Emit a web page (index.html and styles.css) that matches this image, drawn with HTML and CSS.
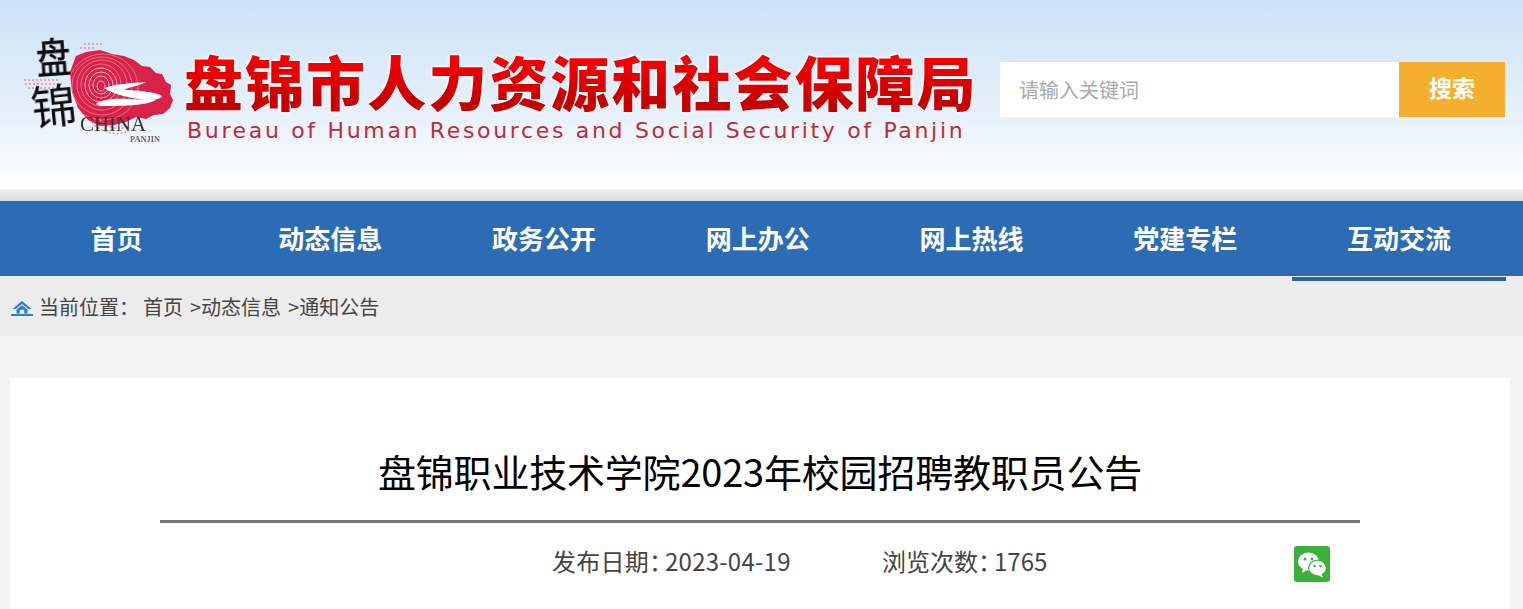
FILE: index.html
```html
<!DOCTYPE html>
<html lang="zh-CN">
<head>
<meta charset="utf-8">
<title>盘锦职业技术学院2023年校园招聘教职员公告</title>
<link rel="stylesheet" href="styles.css">
</head>
<body>
<header class="banner">
  <div class="banner-inner">
    <svg class="logo" viewBox="20 32 156 116" width="156" height="116" aria-label="盘锦 CHINA PANJIN">
      <defs>
        <filter id="soft" x="-5%" y="-5%" width="110%" height="110%"><feGaussianBlur stdDeviation="0.45"/></filter>
        <filter id="rough" x="-5%" y="-5%" width="110%" height="110%"><feGaussianBlur stdDeviation="0.7"/></filter>
        <filter id="ink" x="-10%" y="-10%" width="120%" height="120%"><feGaussianBlur stdDeviation="0.3"/></filter>
        <clipPath id="blobclip"><path d="M76 56 L86 52 L100 50 L112 54 L124 56 L134 60 L142 66 L150 67 L156 73 L162 74 L166 82 L171 85 L170 94 L173 100 L170 108 L163 114 L154 115 L146 119 L136 117 L126 122 L114 125 L100 126 L88 120 L78 108 L72 92 L70 72 Z"/></clipPath>
      </defs>
      <g filter="url(#rough)">
        <path class="blob" d="M76 56 L86 52 L100 50 L112 54 L124 56 L134 60 L142 66 L150 67 L156 73 L162 74 L166 82 L171 85 L170 94 L173 100 L170 108 L163 114 L154 115 L146 119 L136 117 L126 122 L114 125 L100 126 L88 120 L78 108 L72 92 L70 72 Z"/>
      </g>
      <g class="ridges-faint" filter="url(#soft)">
        <path d="M24 80 H60 M25 84 H62 M28 88 H64"/>
        <path d="M84 44 H104 M80 48 H96"/>
        <path d="M92 122 C100 132 114 136 126 132"/>
        <path d="M100 120 C108 128 116 130 128 127"/>
      </g>
      <g class="ridges" clip-path="url(#blobclip)" filter="url(#soft)">
        <ellipse cx="101" cy="86" rx="4" ry="5"/>
        <ellipse cx="101" cy="85" rx="8" ry="9"/>
        <ellipse cx="101" cy="85" rx="12" ry="13"/>
        <ellipse cx="101" cy="85" rx="16" ry="17"/>
        <ellipse class="ridge-out" cx="101" cy="85" rx="20" ry="21"/>
        <ellipse class="ridge-out" cx="102" cy="85" rx="25" ry="25"/>
        <ellipse class="ridge-out" cx="102" cy="86" rx="30" ry="29"/>
        <ellipse class="ridge-out" cx="103" cy="87" rx="35" ry="33"/>
      </g>
      <g class="swoosh" filter="url(#soft)">
        <path d="M104 88 C116 84 130 83 146 82 C140 86 128 87 124 90 C136 90 156 92 162 96 C160 101 146 101 132 98 C122 96 112 93 104 88 Z"/>
        <path d="M96 104 C100 99 118 98 130 99 C140 100 150 99 156 100 C146 106 120 106 100 106 Z"/>
      </g>
      <text class="logo-han" filter="url(#ink)" transform="translate(37 74) rotate(-4) scale(.92 1.08)">盘</text>
      <text class="logo-han logo-han-low" filter="url(#ink)" transform="translate(33 125) rotate(-6) scale(.98 1)">锦</text>
      <text class="logo-china" filter="url(#ink)" x="80" y="131" textLength="66" lengthAdjust="spacingAndGlyphs">CHINA</text>
      <text class="logo-panjin" filter="url(#ink)" x="130" y="142" textLength="30" lengthAdjust="spacingAndGlyphs">PANJIN</text>
    </svg>
    <div class="brand">
      <div class="brand-cn">盘锦市人力资源和社会保障局</div>
      <div class="brand-en">Bureau of Human Resources and Social Security of Panjin</div>
    </div>
    <form class="search">
      <input class="search-input" type="text" placeholder="请输入关键词">
      <button class="search-btn" type="button">搜索</button>
    </form>
  </div>
</header>
<nav class="nav">
  <a class="nav-item" href="#">首页</a>
  <a class="nav-item" href="#">动态信息</a>
  <a class="nav-item" href="#">政务公开</a>
  <a class="nav-item" href="#">网上办公</a>
  <a class="nav-item" href="#">网上热线</a>
  <a class="nav-item" href="#">党建专栏</a>
  <a class="nav-item is-active" href="#">互动交流</a>
</nav>
<div class="crumbs">
  <svg class="home" viewBox="0 0 22 16" width="22" height="16" aria-hidden="true">
    <path d="M11 1 L1.5 9 H4.5 L11 4 L17.5 9 H20.5 Z"/>
    <path d="M5.5 9.5 L11 5.2 L16.5 9.5 V13.5 H13.2 V9.8 H8.8 V13.5 H5.5 Z"/>
    <rect x="0" y="14" width="22" height="2"/>
  </svg>
  <span class="crumb-label">当前位置：</span>
  <span class="crumb-path">首页 &gt;动态信息 &gt;通知公告</span>
</div>
<main class="card">
  <h1 class="title">盘锦职业技术学院2023年校园招聘教职员公告</h1>
  <div class="meta">
    <span class="meta-date">发布日期<span class="colon">：</span>2023-04-19</span>
    <span class="meta-views">浏览次数<span class="colon">：</span>1765</span>
    <svg class="wechat" viewBox="0 0 36 36" width="36" height="36" aria-label="微信">
      <rect width="36" height="36" rx="3" fill="#3bb13b"/>
      <ellipse cx="14.5" cy="15.5" rx="10.5" ry="9" fill="#fff"/>
      <path d="M9 22 L8 27 L14 23.5 Z" fill="#fff"/>
      <circle cx="11" cy="13" r="1.5" fill="#3bb13b"/>
      <circle cx="18" cy="13" r="1.5" fill="#3bb13b"/>
      <ellipse cx="23.5" cy="22" rx="9.5" ry="8.2" fill="#3bb13b"/>
      <ellipse cx="23.5" cy="22" rx="8.3" ry="7.2" fill="#fff"/>
      <path d="M27 27.5 L29 31.5 L23 28.8 Z" fill="#fff"/>
      <circle cx="20.5" cy="20" r="1.3" fill="#3bb13b"/>
      <circle cx="26.5" cy="20" r="1.3" fill="#3bb13b"/>
    </svg>
  </div>
</main>
</body>
</html>
```
FILE: styles.css
```css
* { box-sizing: border-box; }
html, body { margin: 0; padding: 0; height: 609px; overflow: hidden; }
body {
  background: #f4f4f4;
  font-family: "Noto Sans CJK SC", "Liberation Sans", sans-serif;
  color: #333;
}
a { color: inherit; text-decoration: none; }

.banner {
  height: 201px;
  background: linear-gradient(to bottom, #f1f1f1 0, #d9d9d9 100%) bottom / 100% 12px no-repeat,
              linear-gradient(to bottom, #cbe3f8 0, #e4effa 105px, #ffffff 189px);
}
.banner-inner {
  display: flex;
  align-items: flex-start;
  padding: 32px 18px 0 20px;
}
.logo { flex: none; display: block; overflow: visible; }
.blob { fill: #d9204a; }
.ridges ellipse { fill: none; stroke: #f2b3c2; stroke-width: 1; }
.ridges .ridge-out { stroke: #e9849b; stroke-width: .8; }
.ridges-faint path { fill: none; stroke: #ea8ea3; stroke-width: 1.6; stroke-dasharray: 2 2; }
.swoosh path { fill: #fff; }
.logo-han { font-family: "Noto Sans CJK SC", sans-serif; font-size: 38px; font-weight: 500; fill: #111; }
.logo-han-low { font-size: 46px; font-weight: 400; }
.logo-china { font-family: "Liberation Serif", serif; font-size: 21px; fill: #333; }
.logo-panjin { font-family: "Liberation Serif", serif; font-size: 8px; font-weight: 700; fill: #666; }

.brand { width: 800px; margin-left: 8px; padding-top: 13px; }
.brand-cn {
  font-size: 59px;
  line-height: 72px;
  font-weight: 900;
  letter-spacing: 2.05px;
  white-space: nowrap;
  background: linear-gradient(to bottom, #f40000 25%, #c40000 80%);
  -webkit-background-clip: text;
  background-clip: text;
  color: transparent;
  filter: drop-shadow(0 0 1.5px #fff) drop-shadow(0 0 1px #fff);
}
.brand-en {
  margin-top: -1px;
  margin-left: 3px;
  font-family: "DejaVu Sans", sans-serif;
  font-size: 22px;
  line-height: 30px;
  letter-spacing: 2.67px;
  color: #c22a35;
  white-space: nowrap;
}

.search { display: flex; margin-left: auto; margin-top: 30px; }
.search-input {
  width: 399px;
  height: 55px;
  border: 0;
  outline: 0;
  padding: 0 19px;
  background: #fff;
  font: 400 20px "Noto Sans CJK SC", sans-serif;
}
.search-input::placeholder { color: #a9a9a9; opacity: 1; }
.search-btn {
  width: 106px;
  height: 55px;
  border: 0;
  background: #f4af2f;
  color: #fff;
  font: 700 23px "Noto Sans CJK SC", sans-serif;
  padding: 0 0 5px;
}

.nav {
  display: flex;
  height: 75px;
  padding-left: 9.6px;
  background: #2b6cb5;
}
.nav-item {
  position: relative;
  flex: 0 0 213.75px;
  text-align: center;
  color: #fff;
  font-size: 26px;
  font-weight: 700;
  line-height: 73px;
  height: 75px;
}
.is-active::after {
  content: "";
  position: absolute;
  left: 0;
  right: 0;
  bottom: -5px;
  height: 4px;
  background: #2b62a3;
}

.crumbs {
  display: flex;
  align-items: center;
  height: 60px;
  padding-left: 11px;
  background: #ececec;
  font-size: 20px;
  color: #444;
}
.home { flex: none; fill: #2a80d2; margin-right: 6px; margin-top: 3px; }
.crumb-label { width: 104px; flex: none; }
.crumb-path { word-spacing: 2.5px; }

.card {
  height: 231px;
  margin: 42px 13px 0 10px;
  padding: 60px 150px 0;
  background: #fff;
}
.title {
  margin: 0;
  height: 85px;
  border-bottom: 3px solid #777;
  text-align: center;
  font-size: 38px;
  font-weight: 400;
  line-height: 66px;
  letter-spacing: -0.2px;
  color: #000;
  white-space: nowrap;
}
.meta {
  display: flex;
  align-items: flex-start;
  height: 36px;
  margin-top: 23px;
  padding-left: 392px;
  font-size: 24px;
  line-height: 30px;
  color: #444;
}
.meta-date { width: 330px; flex: none; letter-spacing: .25px; }
.colon { letter-spacing: -8px; }
.wechat { display: block; flex: none; margin-left: auto; margin-right: 30px; }
```
